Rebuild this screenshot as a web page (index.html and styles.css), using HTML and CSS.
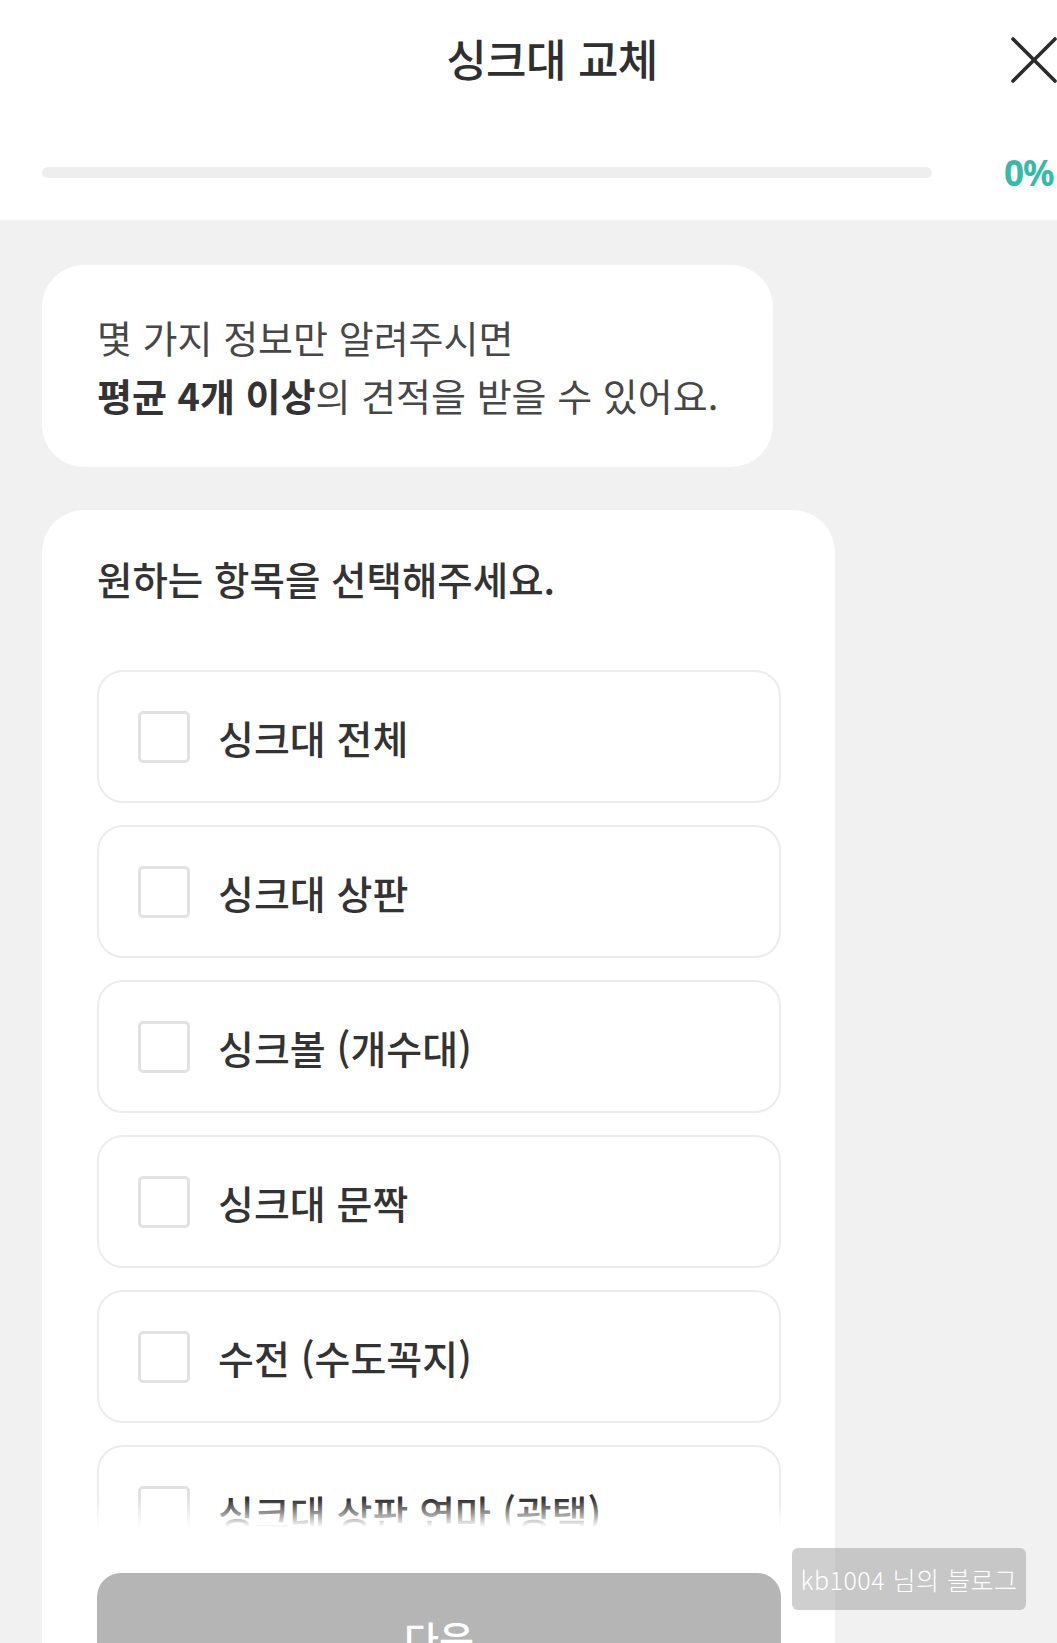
FILE: index.html
```html
<!DOCTYPE html>
<html lang="ko">
<head>
<meta charset="utf-8">
<title>싱크대 교체</title>
<link rel="stylesheet" href="styles.css">
</head>
<body>
<div class="page">
  <header class="header">
    <div class="title-row">
      <span></span>
      <h1 class="title">싱크대 교체</h1>
      <button class="close" aria-label="닫기">
        <svg width="46" height="46" viewBox="0 0 46 46"><path d="M2 2 L44 44 M44 2 L2 44" stroke="#2b2b2b" stroke-width="3.6" stroke-linecap="round" fill="none"/></svg>
      </button>
    </div>
    <div class="progress-row">
      <div class="progress"><div class="progress-fill" style="width:0%"></div></div>
      <span class="percent">0%</span>
    </div>
  </header>

  <main class="content">
    <section class="info-card">
      <p>몇 가지 정보만 알려주시면</p>
      <p><strong>평균 4개 이상</strong>의 견적을 받을 수 있어요.</p>
    </section>

    <section class="select-card">
      <h2 class="question">원하는 항목을 선택해주세요.</h2>
      <div class="list-wrap">
        <ul class="options">
          <li class="option"><span class="check"></span><span class="label">싱크대 전체</span></li>
          <li class="option"><span class="check"></span><span class="label">싱크대 상판</span></li>
          <li class="option"><span class="check"></span><span class="label">싱크볼 (개수대)</span></li>
          <li class="option"><span class="check"></span><span class="label">싱크대 문짝</span></li>
          <li class="option"><span class="check"></span><span class="label">수전 (수도꼭지)</span></li>
          <li class="option"><span class="check"></span><span class="label">싱크대 상판 연마 (광택)</span></li>
        </ul>
        <div class="fade"></div>
      </div>
      <button class="next">다음</button>
    </section>
  </main>

  <div class="watermark">kb1004 님의 블로그</div>
</div>
</body>
</html>
```

FILE: styles.css
```css
* { box-sizing: border-box; }
html, body { margin: 0; padding: 0; }
body {
  width: 1057px;
  height: 1643px;
  overflow: hidden;
  background: #f1f1f1;
  font-family: "Noto Sans CJK KR", "Noto Sans", sans-serif;
  color: #333;
}
.page { position: relative; height: 1643px; overflow: hidden; }

.header {
  background: #fff;
  height: 220px;
  display: flex;
  flex-direction: column;
}
.title-row {
  display: grid;
  grid-template-columns: 1fr auto 1fr;
  align-items: center;
  padding-left: 47px;
  height: 120px;
  padding-bottom: 4px;
}
.title {
  margin: 0;
  font-size: 44px;
  font-weight: 500;
  color: #2f2f2f;
  letter-spacing: -0.5px;
  line-height: 1;
}
.close {
  justify-self: end;
  background: none;
  border: 0;
  padding: 0;
  width: 46px;
  height: 46px;
  margin-top: 4px;
  display: flex;
}
.progress-row {
  display: flex;
  align-items: center;
  padding-left: 42px;
  margin-top: 35px;
  gap: 72px;
  white-space: nowrap;
}
.progress {
  width: 890px;
  height: 11px;
  border-radius: 6px;
  background: #eeeeee;
  flex: none;
}
.progress-fill { height: 100%; background: #2fbba7; border-radius: 6px; }
.percent {
  font-size: 35px;
  font-weight: 700;
  color: #34bca9;
  font-family: "Noto Sans", "Noto Sans CJK KR", sans-serif;
  letter-spacing: -1px;
  line-height: 1;
}

.content {
  padding: 45px 0 0 42px;
  display: flex;
  flex-direction: column;
  gap: 43px;
}
.info-card {
  width: 731px;
  height: 202px;
  background: #fff;
  border-radius: 42px;
  padding: 43px 0 0 55px;
}
.info-card p {
  margin: 0;
  font-size: 38px;
  line-height: 58px;
  color: #474747;
  letter-spacing: 0;
  white-space: nowrap;
}
.info-card strong { font-weight: 700; color: #333; }

.select-card {
  width: 793px;
  background: #fff;
  border-radius: 42px 42px 0 0;
  padding: 43px 0 0 55px;
  height: 1200px;
}
.question {
  margin: 0;
  font-size: 38.5px;
  font-weight: 500;
  line-height: 50px;
  color: #333;
  letter-spacing: 0;
}
.list-wrap {
  position: relative;
  margin-top: 67px;
  height: 860px;
  overflow: hidden;
}
.options {
  list-style: none;
  margin: 0;
  padding: 0;
  display: flex;
  flex-direction: column;
  gap: 22px;
}
.option {
  width: 684px;
  height: 133px;
  border: 2px solid #ececec;
  border-radius: 26px;
  display: flex;
  align-items: center;
  padding-left: 39px;
  gap: 28px;
}
.check {
  width: 52px;
  height: 52px;
  border: 3px solid #e2e2e2;
  border-radius: 5px;
  flex: none;
}
.label {
  font-size: 39px;
  font-weight: 500;
  color: #333;
  letter-spacing: 0;
}
.fade {
  position: absolute;
  left: 0;
  right: 0;
  bottom: 0;
  height: 30px;
  background: linear-gradient(to bottom, rgba(255,255,255,0), #fff 90%);
}
.next {
  margin-top: 43px;
  width: 684px;
  height: 128px;
  border: 0;
  border-radius: 24px;
  background: #b5b5b5;
  color: #fff;
  font-family: "Noto Sans CJK KR", sans-serif;
  font-size: 38px;
  font-weight: 500;
}

.watermark {
  position: absolute;
  left: 792px;
  top: 1548px;
  width: 234px;
  height: 62px;
  border-radius: 6px;
  background: rgba(140,140,140,0.42);
  color: #fff;
  font-family: "Noto Sans CJK KR", sans-serif;
  font-weight: 300;
  font-size: 25px;
  display: flex;
  align-items: center;
  justify-content: center;
  letter-spacing: 0.5px;
}
```
